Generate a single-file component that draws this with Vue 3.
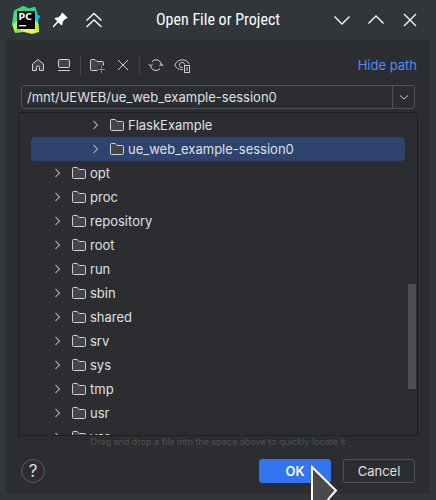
<script setup>
import { ref } from 'vue'

const path = ref('/mnt/UEWEB/ue_web_example-session0')
const selected = ref('ue_web_example-session0')
const folders = [
  { name: 'FlaskExample', nested: true },
  { name: 'ue_web_example-session0', nested: true },
  ...['opt', 'proc', 'repository', 'root', 'run', 'sbin', 'shared', 'srv', 'sys', 'tmp', 'usr', 'var'].map((name) => ({ name, nested: false })),
]
</script>

<template>
  <div class="window">
    <header class="titlebar">
      <div class="group">
        <svg class="logo" viewBox="0 0 28 28" aria-hidden="true">
          <defs>
            <linearGradient id="lime" x1="0" y1="0" x2="1" y2="1">
              <stop offset="0" stop-color="#21d789" />
              <stop offset=".5" stop-color="#6fe05c" />
              <stop offset="1" stop-color="#fcf84a" />
            </linearGradient>
          </defs>
          <path d="M2 4.500 11 0l6 2.500 6-1.500 2 6.500L27 26l-7 2-8-2-9 1-3-9Z" fill="url(#lime)" />
          <path d="m11 0 6 2.500 6-1.500L25 7l-8 2-9-6Z" fill="#27d884" />
          <path d="M1.500 8 5 5v9l-4.500 6Z" fill="#3be08a" />
          <path d="m23 7 5 3-2 5-4 2Z" fill="#07c3f2" />
          <path d="m23 14 3.500 4 .5 8-4-3Z" fill="#b9ee4e" />
          <path d="M.5 19 5 15v7l-2 4Z" fill="#c9f04c" />
          <path d="m8 23 10 0 4 2-3 2-7-1.500Z" fill="#f4f44c" />
          <rect x="5" y="5" width="18" height="18" fill="#050505" />
          <rect x="7" y="19" width="7" height="1.400" fill="#eee" />
          <text x="6.600" y="14" class="logo-text">PC</text>
        </svg>
        <button class="wm pin" aria-label="Keep above">
          <svg viewBox="0 0 16 16"><path fill="#fcfcfc" d="m10.200.4 5.400 5.200-1 1.100-.8-.3-3.200 3.300c.3 1.400 0 2.700-1 3.700L6.300 10.400 1.500 15.400.6 14.500 5.200 9.300 2.400 6.500c1.100-1 2.400-1.300 3.800-.9L9.500 2.300 9.100 1.500Z" /></svg>
        </button>
        <button class="wm shade" aria-label="Roll up">
          <svg viewBox="0 0 16 16"><path d="m.5 8.500 7.500-7 7.500 7M.5 15 8 8l7.500 7" /></svg>
        </button>
      </div>
      <h1>Open File or Project</h1>
      <div class="group right">
        <button class="wm" aria-label="Minimize"><svg viewBox="0 0 16 16"><path d="m.5 4.500 7.500 7.500 7.500-7.500" /></svg></button>
        <button class="wm" aria-label="Maximize"><svg viewBox="0 0 16 16"><path d="M.5 11.500 8 4l7.500 7.500" /></svg></button>
        <button class="wm" aria-label="Close"><svg viewBox="0 0 16 16"><path d="m2 2 12 12M14 2 2 14" /></svg></button>
      </div>
    </header>

    <main class="dialog">
      <div class="toolbar">
        <button class="tool" aria-label="Home">
          <svg viewBox="0 0 16 16"><path class="filled" d="M2.500 7 8 2.500 13.500 7v6.500h-4v-3a1.500 1.500 0 0 0-3 0v3h-4Z" /></svg>
        </button>
        <button class="tool" aria-label="Desktop">
          <svg viewBox="0 0 16 16"><rect class="filled" x="2.500" y="2.500" width="11" height="8" rx="1" /><path d="M2 13.500h12" /></svg>
        </button>
        <span class="separator"></span>
        <button class="tool" aria-label="New folder">
          <svg viewBox="0 0 16 16"><path class="filled" d="M8.500 13.500h-6a1 1 0 0 1-1-1v-9a1 1 0 0 1 1-1h3.500l2 2h5.500a1 1 0 0 1 1 1v3" /><path class="none" d="M9 9h7v7H9Z" /><path class="blue" d="M12.500 9v7M9 12.500h7" /></svg>
        </button>
        <button class="tool" aria-label="Delete">
          <svg viewBox="0 0 16 16"><path d="m3 3 10 10M13 3 3 13" /></svg>
        </button>
        <span class="separator"></span>
        <button class="tool" aria-label="Refresh">
          <svg viewBox="0 0 16 16"><path d="M4 4.500a5.500 5.500 0 0 1 9.500 4V7.500M11.300 9.200l2.200-2.200 2.200 2.200M12 11.800A5.500 5.500 0 0 1 2.500 8V9M.3 6.800l2.200 2.200 2.200-2.200" /></svg>
        </button>
        <button class="tool" aria-label="Show hidden files">
          <svg viewBox="0 0 16 16"><path d="M9 12.500C5.500 13 2.500 11.500.8 8 3.500 1.300 12.500 1.300 15.200 7" /><path d="M8.500 10.500A2.600 2.600 0 1 1 10.600 7.500" /><rect x="10.500" y="8.500" width="5" height="7" /><path d="M12 11h2M12 13h2" /></svg>
        </button>
        <a class="hide" href="#">Hide path</a>
      </div>

      <div class="combo">
        <input v-model="path" type="text" aria-label="Path" spellcheck="false" />
        <button aria-label="Recent paths"><svg viewBox="0 0 16 16"><path d="M4 6.500 8 10l4-3.500" /></svg></button>
      </div>

      <div class="tree">
        <ul role="tree" aria-label="Folders">
          <li
            v-for="folder in folders"
            :key="folder.name"
            role="treeitem"
            :aria-selected="folder.name === selected"
            :class="{ nested: folder.nested, selected: folder.name === selected }"
            @click="selected = folder.name"
          >
            <svg class="arrow" viewBox="0 0 16 16"><path d="m6.500 4 4 4-4 4" /></svg>
            <svg class="folder" viewBox="0 0 16 16"><path class="filled" d="M1.500 3.500a1 1 0 0 1 1-1h3.700L8.200 4.500h5.300a1 1 0 0 1 1 1v7a1 1 0 0 1-1 1h-11a1 1 0 0 1-1-1Z" /></svg>
            <span>{{ folder.name }}</span>
          </li>
        </ul>
        <span class="thumb"></span>
      </div>
      <p class="hint">Drag and drop a file into the space above to quickly locate it</p>

      <footer>
        <button class="help" aria-label="Help">?</button>
        <button class="action primary">OK</button>
        <button class="action">Cancel</button>
      </footer>
    </main>

    <svg class="pointer" viewBox="0 0 30 38" aria-hidden="true">
      <path d="M2 2v36h14l4-6 6-6.500Z" />
    </svg>
  </div>
</template>

<style>
body {
  margin: 0;
}
</style>

<style scoped>
* {
  box-sizing: border-box;
}
.window {
  position: relative;
  display: flex;
  flex-direction: column;
  height: 100vh;
  padding: 0 6px 6px;
  overflow: hidden;
  background: #31363b;
  color: #dfe1e5;
  font: 13px/24px Inter, sans-serif;
}
button,
input {
  margin: 0;
  padding: 0;
  border: 0;
  background: none;
  color: inherit;
  font: inherit;
}
svg {
  display: block;
  fill: none;
  stroke: #ced0d6;
}
.titlebar {
  display: grid;
  grid-template-columns: 1fr auto 1fr;
  align-items: center;
  flex: 0 0 40px;
  padding: 0 6px;
}
.group {
  display: flex;
  align-items: center;
  gap: 18px;
}
.right {
  justify-content: flex-end;
  padding-right: 6px;
}
.logo {
  width: 28px;
  height: 28px;
  stroke: none;
}
.logo-text {
  fill: #fff;
  font: bold 9px "DejaVu Sans", sans-serif;
}
.wm svg {
  width: 16px;
  height: 16px;
  stroke: #fcfcfc;
  stroke-width: 1.3;
}
.pin {
  margin-left: -6px;
}
.pin svg {
  stroke: none;
}
h1 {
  margin: 0;
  color: #fcfcfc;
  font: 16px/24px "Roboto Condensed", "Noto Sans", sans-serif;
  white-space: nowrap;
}
.dialog {
  display: flex;
  flex: 1;
  flex-direction: column;
  min-height: 0;
  padding: 12px 12px 11px;
  background: #2b2d30;
}
.toolbar {
  display: flex;
  align-items: center;
  gap: 10px;
  height: 26px;
  padding: 0 1px 0 12px;
}
.tool svg {
  width: 16px;
  height: 16px;
}
.filled {
  fill: #43454a;
}
.none {
  fill: #2b2d30;
  stroke: none;
}
.blue {
  stroke: #548af7;
}
.separator {
  width: 1px;
  height: 20px;
  margin: 0 -2px;
  background: #43454a;
}
.hide {
  margin-left: auto;
  color: #548af7;
  text-decoration: none;
}
.combo {
  display: flex;
  height: 24px;
  margin: 7px 3px 3px;
  border: 1px solid #4e5157;
  border-radius: 3px;
}
.combo input {
  flex: 1;
  min-width: 0;
  padding-left: 5px;
  outline: 0;
}
.combo button {
  display: grid;
  place-items: center;
  width: 22px;
  border-left: 1px solid #4e5157;
}
.combo svg {
  width: 16px;
  height: 16px;
}
.tree {
  position: relative;
  flex: 1;
  min-height: 0;
  overflow: hidden;
  border: 1px solid #1e1f22;
}
ul {
  margin: 0;
  padding: 0 12px;
  list-style: none;
}
li {
  display: flex;
  align-items: center;
  height: 24px;
  padding-left: 18px;
  border-radius: 4px;
}
.nested {
  padding-left: 56px;
}
.selected {
  background: #2e436e;
}
.arrow {
  width: 16px;
  height: 16px;
  margin-right: 6px;
  stroke: #9da0a8;
  stroke-width: 1.2;
}
.folder {
  width: 16px;
  height: 16px;
  margin-right: 3px;
}
.thumb {
  position: absolute;
  top: 53%;
  right: 1px;
  width: 8px;
  height: 105px;
  background: #4d4e51;
}
.hint {
  margin: 0;
  color: #4e5157;
  font-size: 9px;
  line-height: 12px;
  text-align: center;
}
footer {
  display: flex;
  align-items: center;
  gap: 12px;
  margin: 11px 3px 0;
}
.help {
  width: 24px;
  height: 24px;
  margin-right: auto;
  border: 1px solid #5a5d63;
  border-radius: 50%;
  font-size: 17px;
  line-height: 22px;
}
.action {
  width: 72px;
  height: 24px;
  border: 1px solid #4e5157;
  border-radius: 3px;
  line-height: 22px;
}
.primary {
  border-color: #3574f0;
  background: #3574f0;
  color: #fff;
  font-weight: 600;
}
.pointer {
  position: absolute;
  top: 465px;
  left: 310px;
  width: 30px;
  height: 38px;
}
.pointer path {
  fill: #4a4a4a;
  stroke: #fff;
  stroke-width: 2;
}
</style>
